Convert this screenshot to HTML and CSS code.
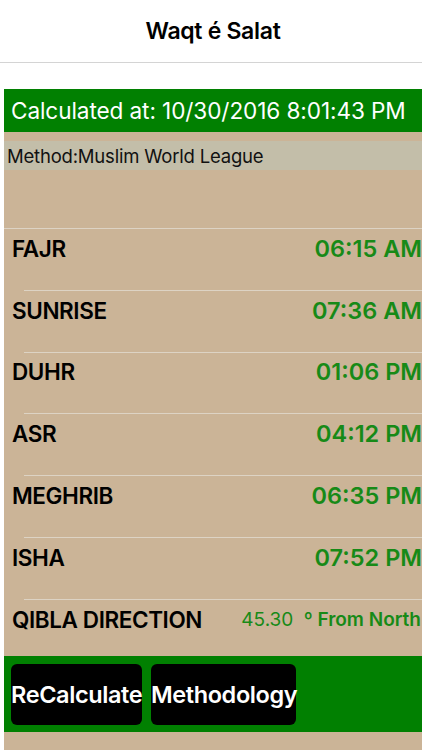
FILE: index.html
```html
<!DOCTYPE html>
<html>
<head>
<meta charset="utf-8">
<link rel="stylesheet" href="styles.css">
</head>
<body>
<header class="navbar"><h1 class="title">Waqt é Salat</h1></header>
<main class="content">
  <div class="calc-bar">Calculated at: 10/30/2016 8:01:43 PM</div>
  <div class="method">Method:Muslim World League</div>
  <div class="spacer"></div>
  <ul class="times">
    <li class="row first"><span class="name">FAJR</span><span class="time">06:15 AM</span></li>
    <li class="row"><span class="name">SUNRISE</span><span class="time">07:36 AM</span></li>
    <li class="row"><span class="name">DUHR</span><span class="time">01:06 PM</span></li>
    <li class="row"><span class="name">ASR</span><span class="time">04:12 PM</span></li>
    <li class="row"><span class="name">MEGHRIB</span><span class="time">06:35 PM</span></li>
    <li class="row"><span class="name">ISHA</span><span class="time">07:52 PM</span></li>
    <li class="row last"><span class="name">QIBLA DIRECTION</span><span class="qibla"><span class="deg">45.30</span> <b>º From North</b></span></li>
  </ul>
  <div class="actions">
    <button class="btn btn-recalc">ReCalculate</button>
    <button class="btn btn-method">Methodology</button>
  </div>
</main>
</body>
</html>
```
FILE: styles.css
```css
* { box-sizing: border-box; }
html, body { margin: 0; padding: 0; background: #fff; }
body {
  width: 422px;
  height: 750px;
  overflow: hidden;
  font-family: Inter, "Liberation Sans", Arial, sans-serif;
}
.navbar {
  height: 63px;
  border-bottom: 1px solid #d4d4d4;
  display: flex;
  align-items: center;
  justify-content: center;
}
.title {
  margin: 0 0 0 4px;
  font-size: 23px;
  font-weight: 600;
  color: #000;
  letter-spacing: -0.3px;
}
.content {
  margin: 26px 0 0 4px;
  background: #cbb497;
  height: 661px;
  overflow: hidden;
}
.calc-bar {
  background: #018001;
  color: #fff;
  height: 43px;
  display: flex;
  align-items: center;
  padding-left: 7px;
  font-size: 22.6px;
  white-space: nowrap;
  letter-spacing: -0.1px;
}
.method {
  margin-top: 9px;
  height: 29px;
  background: #c3bea9;
  color: #111;
  font-size: 18.5px;
  display: flex;
  align-items: center;
  padding-left: 3px;
  letter-spacing: -0.2px;
}
.spacer { height: 58px; }
.times { list-style: none; margin: 0; padding: 0; }
.row {
  height: 61.8px;
  display: flex;
  align-items: center;
  justify-content: space-between;
  padding-left: 8px;
  padding-bottom: 21px;
  position: relative;
  border-top: 1px solid #ddd3c4;
}
.row.last { height: 57.5px; padding-bottom: 17px; }
.row:not(.first) { border-top: none; }
.row:not(.first)::before {
  content: "";
  position: absolute;
  top: 0; left: 20px; right: 0;
  height: 1px;
  background: #ddd3c4;
}
.name {
  font-size: 22.5px;
  font-weight: 600;
  color: #000;
  letter-spacing: -0.4px;
}
.time {
  font-size: 23.5px;
  font-weight: 600;
  color: #178a17;
  margin-right: 0;
  white-space: nowrap;
}
.qibla {
  color: #178a17;
  font-size: 19px;
  white-space: nowrap;
  margin-right: 1px;
}
.qibla b { font-weight: 600; }
.deg { margin-right: 5px; }
.actions {
  background: #018001;
  height: 76px;
  display: flex;
  align-items: center;
  gap: 9px;
  padding-left: 7px;
}
.btn {
  background: #000;
  color: #fff;
  border: none;
  border-radius: 6px;
  height: 61px;
  padding: 0;
  font-family: inherit;
  font-size: 23.5px;
  font-weight: 600;
  letter-spacing: -0.4px;
  white-space: nowrap;
}
.btn-recalc { width: 131px; }
.btn-method { width: 145px; }
```
